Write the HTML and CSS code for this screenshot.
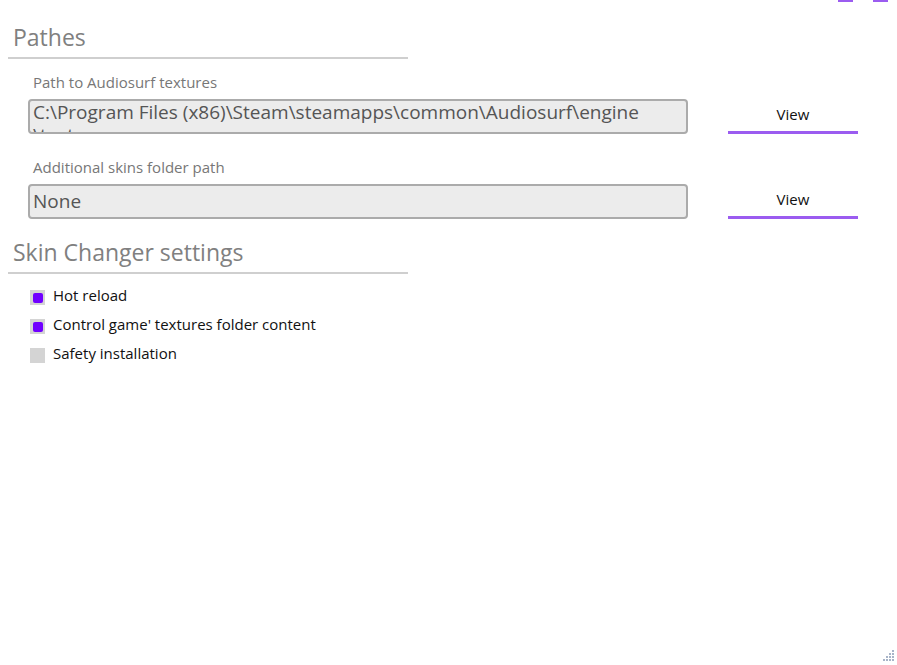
FILE: index.html
```html
<!DOCTYPE html>
<html>
<head>
<meta charset="utf-8">
<link rel="stylesheet" href="styles.css">
</head>
<body>
<div class="window">
  <div class="topbar">
    <span class="ctl"></span>
    <span class="ctl"></span>
  </div>
  <div class="section-title first">Pathes</div>
  <div class="field first">
    <div class="label">Path to Audiosurf textures</div>
    <div class="row">
      <div class="input">C:\Program Files (x86)\Steam\steamapps\common\Audiosurf\engine<wbr>\textures</div>
      <div class="btn">View</div>
    </div>
  </div>
  <div class="field">
    <div class="label">Additional skins folder path</div>
    <div class="row">
      <div class="input single">None</div>
      <div class="btn">View</div>
    </div>
  </div>
  <div class="section-title">Skin Changer settings</div>
  <div class="checks">
    <div class="check"><span class="box on"></span><span>Hot reload</span></div>
    <div class="check"><span class="box on"></span><span>Control game' textures folder content</span></div>
    <div class="check"><span class="box"></span><span>Safety installation</span></div>
  </div>
  <div class="grip">
    <svg width="12" height="12" viewBox="0 0 12 12">
      <g fill="#a8b4c8">
        <rect x="9" y="0" width="2" height="2"/>
        <rect x="6" y="3" width="2" height="2"/><rect x="9" y="3" width="2" height="2"/>
        <rect x="3" y="6" width="2" height="2"/><rect x="6" y="6" width="2" height="2"/><rect x="9" y="6" width="2" height="2"/>
        <rect x="0" y="9" width="2" height="2"/><rect x="3" y="9" width="2" height="2"/><rect x="6" y="9" width="2" height="2"/><rect x="9" y="9" width="2" height="2"/>
      </g>
    </svg>
  </div>
</div>
</body>
</html>
```
FILE: styles.css
```css
html, body {
  margin: 0;
  padding: 0;
  background: #ffffff;
}
body {
  font-family: "Open Sans", "Noto Sans", sans-serif;
}
.window {
  position: relative;
  width: 897px;
  height: 665px;
  overflow: hidden;
}
.topbar {
  display: flex;
  justify-content: flex-end;
  gap: 20px;
  padding-right: 9px;
  height: 2px;
}
.ctl {
  width: 15px;
  height: 2px;
  background: #9b5cf0;
}
.section-title {
  width: 395px;
  margin-left: 8px;
  padding-left: 5px;
  font-size: 23px;
  line-height: 28px;
  color: #808080;
  border-bottom: 2px solid #cfcfcf;
  margin-top: 19px;
  padding-bottom: 6px;
}
.section-title.first {
  margin-top: 21px;
}
.field {
  margin-top: 23px;
}
.field.first {
  margin-top: 13px;
}
.label {
  margin-left: 33px;
  font-size: 15px;
  line-height: 20px;
  color: #777777;
}
.row {
  display: flex;
  align-items: flex-end;
  margin-top: 7px;
}
.input {
  box-sizing: border-box;
  margin-left: 28px;
  width: 660px;
  height: 35px;
  padding: 0 3px;
  border: 2px solid #ababab;
  border-radius: 4px;
  background: #ececec;
  color: #555555;
  font-size: 19px;
  line-height: 23px;
  overflow: hidden;
}
.input.single {
  line-height: 31px;
}
.btn {
  box-sizing: border-box;
  margin-left: 40px;
  width: 130px;
  height: 34px;
  border-bottom: 3px solid #9b5cf0;
  text-align: center;
  font-size: 15px;
  line-height: 28px;
  color: #111111;
}
.checks {
  display: flex;
  flex-direction: column;
  gap: 10px;
  margin-top: 12px;
  margin-left: 30px;
}
.check {
  display: flex;
  align-items: center;
  gap: 8px;
  font-size: 15px;
  line-height: 19px;
  color: #111111;
}
.box {
  box-sizing: border-box;
  width: 15px;
  height: 15px;
  background: #d4d4d4;
  margin-top: 4px;
  display: flex;
  align-items: center;
  justify-content: center;
}
.box.on::after {
  content: "";
  width: 10px;
  height: 10px;
  border-radius: 2px;
  background: #7000ff;
}
.grip {
  position: absolute;
  right: 2px;
  bottom: 3px;
  line-height: 0;
}
```
